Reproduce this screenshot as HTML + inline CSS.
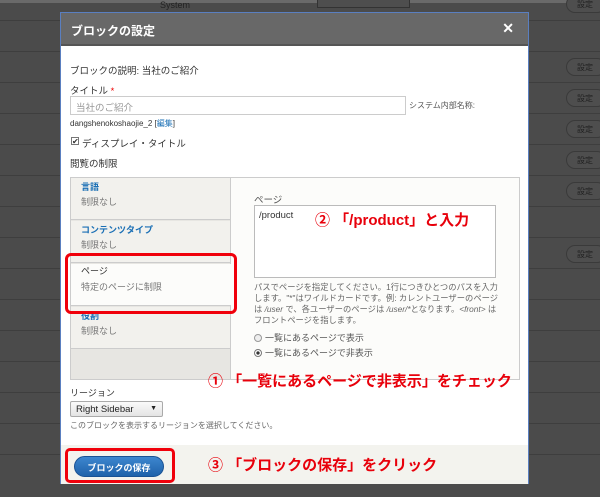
<!DOCTYPE html>
<html><head><meta charset="utf-8"><style>
*{box-sizing:border-box;margin:0;padding:0}
body{width:600px;height:497px;overflow:hidden;background:#4b4b4b;font-family:"Liberation Sans","Noto Sans CJK JP",sans-serif;position:relative;font-size:9px;color:#333}
.row{position:absolute;left:0;width:600px;height:1px;background:#3e3e3e}
.bg{position:absolute;border:1px solid #3a3a3a;border-radius:9px;width:40px;height:18px;left:566px;color:#222;font-size:8px;padding:3px 0 0 10px;background:#4e4e4e}
.a{position:absolute;white-space:nowrap}
#dlg{position:absolute;left:60px;top:12px;width:469px;height:472px;background:#fff;border:1px solid #5a7fc0}
#tb{position:absolute;left:0;top:0;width:100%;height:33px;background:#686868;border-bottom:2px solid #555;color:#fff;font-weight:bold;font-size:12px;padding:9px 0 0 10px}
.red{color:#e8000b;font-weight:bold;font-size:15px}
.tab{position:absolute;left:0;width:159px;height:42px;background:#f2f1ed;border-bottom:1px solid #ccc;padding:4px 0 0 10px;line-height:11px}
.tab b{color:#1a6fb5;font-weight:bold;font-size:9px;display:block;margin-bottom:4px}
.tab span{color:#777;font-size:9px}
</style></head><body>
<div style="position:absolute;left:0;top:0;width:600px;height:3px;background:#6a6a6a"></div>
<div class="row" style="top:20px"></div><div class="row" style="top:51px"></div><div class="row" style="top:82px"></div><div class="row" style="top:113px"></div><div class="row" style="top:144px"></div><div class="row" style="top:175px"></div><div class="row" style="top:206px"></div><div class="row" style="top:237px"></div><div class="row" style="top:268px"></div><div class="row" style="top:299px"></div><div class="row" style="top:330px"></div><div class="row" style="top:361px"></div><div class="row" style="top:392px"></div><div class="row" style="top:423px"></div><div class="row" style="top:454px"></div>
<div class="a" style="left:160px;top:0;color:#222;font-size:9px">System</div>
<div style="position:absolute;left:317px;top:0;width:93px;height:8px;border:1px solid #333;border-top:none;background:#4e4e4e"></div>
<div class="bg" style="top:-5px">設定</div><div class="bg" style="top:58px">設定</div><div class="bg" style="top:89px">設定</div><div class="bg" style="top:120px">設定</div><div class="bg" style="top:151px">設定</div><div class="bg" style="top:182px">設定</div><div class="bg" style="top:245px">設定</div>

<div id="dlg">
<div id="tb">ブロックの設定<span style="position:absolute;right:14px;top:7px;font-size:14px">✕</span></div>
<div class="a" style="left:9px;top:50px;font-size:9.5px">ブロックの説明: 当社のご紹介</div>
<div class="a" style="left:9px;top:70px;font-size:9.5px">タイトル <span style="color:#e00">*</span></div>
<div style="position:absolute;left:9px;top:83px;width:336px;height:19px;border:1px solid #ccc;color:#999;font-size:9.5px;padding:3px 5px">当社のご紹介</div>
<div class="a" style="left:348px;top:87px;font-size:8px;color:#555">システム内部名称:</div>
<div class="a" style="left:9px;top:105px;font-size:8px">dangshenokoshaojie_2 [<span style="color:#1a6fb5">編集</span>]</div>
<div style="position:absolute;left:10px;top:124px;width:8px;height:8px;border:1px solid #777;background:#fff;font-size:8px;line-height:7px;text-align:center">✔</div>
<div class="a" style="left:21px;top:123px;font-size:9.5px">ディスプレイ・タイトル</div>
<div class="a" style="left:9px;top:143px;font-size:9.5px">閲覧の制限</div>
<div style="position:absolute;left:9px;top:164px;width:450px;height:203px;border:1px solid #ccc;background:#fcfcfa">
 <div style="position:absolute;left:0;top:0;width:160px;height:201px;background:#e7e6e2;border-right:1px solid #ccc">
  <div class="tab" style="top:0"><b>言語</b><span>制限なし</span></div>
  <div class="tab" style="top:43px"><b>コンテンツタイプ</b><span>制限なし</span></div>
  <div class="tab" style="top:86px;background:#fcfcfa;width:160px;padding-top:2px"><b style="color:#333;font-weight:normal;margin-bottom:5px">ページ</b><span>特定のページに制限</span></div>
  <div class="tab" style="top:129px"><b>役割</b><span>制限なし</span></div>
 </div>
 <div class="a" style="left:183px;top:14px;font-size:9.5px;color:#555">ページ</div>
 <div style="position:absolute;left:183px;top:27px;width:242px;height:73px;border:1px solid #bbb;background:#fff;padding:4px;font-size:9.5px">/product</div>
 <div style="position:absolute;left:183px;top:104px;width:245px;font-size:8.3px;color:#666;line-height:11px">パスでページを指定してください。1行につきひとつのパスを入力します。"*"はワイルドカードです。例: カレントユーザーのページは <i>/user</i> で、各ユーザーのページは <i>/user/*</i>となります。<i>&lt;front&gt;</i> はフロントページを指します。</div>
 <div class="a" style="left:183px;top:153px;font-size:9px;color:#555"><span style="display:inline-block;width:8px;height:8px;border:1px solid #999;border-radius:50%;vertical-align:-1px;margin-right:3px;background:#eee"></span>一覧にあるページで表示</div>
 <div class="a" style="left:183px;top:168px;font-size:9px;color:#555"><span style="display:inline-block;width:8px;height:8px;border:1px solid #777;border-radius:50%;vertical-align:-1px;margin-right:3px;background:radial-gradient(#333 35%,#fff 45%)"></span>一覧にあるページで非表示</div>
</div>
<div class="a red" style="left:254px;top:196px">② 「/product」と入力</div>
<div class="a red" style="left:147px;top:357px">① 「一覧にあるページで非表示」をチェック</div>
<div class="a" style="left:9px;top:373px;font-size:9px">リージョン</div>
<div style="position:absolute;left:9px;top:388px;width:93px;height:16px;border:1px solid #aaa;border-radius:2px;background:linear-gradient(#fafafa,#e4e4e4);font-size:9.5px;padding:2px 5px;color:#222">Right Sidebar<span style="position:absolute;right:5px;top:3px;font-size:7px">▼</span></div>
<div class="a" style="left:9px;top:407px;font-size:8px;color:#666">このブロックを表示するリージョンを選択してください。</div>
<div style="position:absolute;left:0;top:432px;width:100%;height:39px;background:#f3f3ee"></div>
<div style="position:absolute;left:13px;top:443px;width:90px;height:21px;border-radius:11px;background:linear-gradient(#3d86cf,#1f62aa);border:1px solid #1a5294;color:#fff;font-size:9px;font-weight:bold;text-align:center;padding-top:4px">ブロックの保存</div>
<div class="a red" style="left:147px;top:441px">③ 「ブロックの保存」をクリック</div>
</div>
<div style="position:absolute;left:65px;top:253px;width:172px;height:61px;border:3px solid #f0000b;border-radius:6px"></div>
<div style="position:absolute;left:65px;top:448px;width:110px;height:35px;border:3px solid #f0000b;border-radius:5px"></div>
</body></html>
